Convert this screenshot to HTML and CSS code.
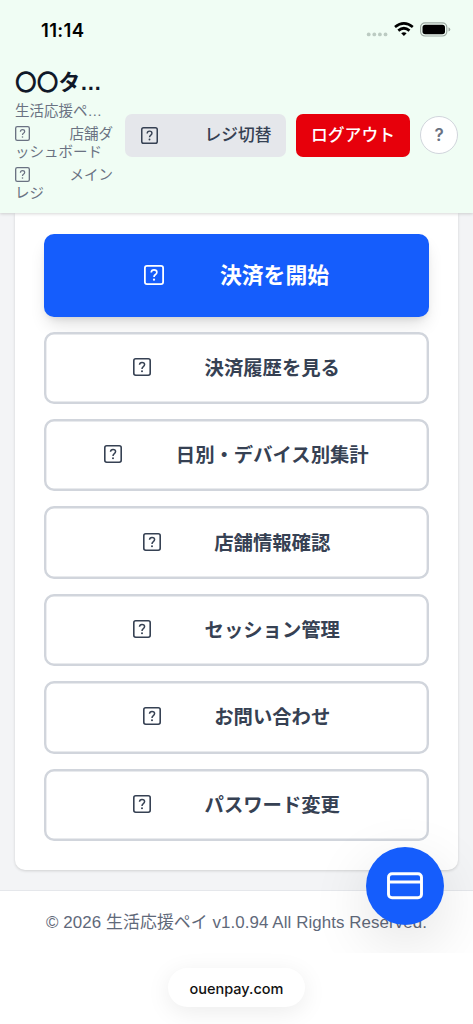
FILE: index.html
```
<!DOCTYPE html>
<html lang="ja">
<head>
<meta charset="utf-8">
<meta name="viewport" content="width=device-width, initial-scale=1">
<title>生活応援ペイ</title>
<link rel="stylesheet" href="styles.css">
</head>
<body>
<svg class="defs" width="0" height="0">
  <symbol id="unknown" viewBox="0 0 18 18">
    <rect x=".8" y=".8" width="16.4" height="16.4" rx="1.9" fill="none" stroke="currentColor" stroke-width="1.6"/>
    <path d="M6.5 6.8C6.6 5.2 7.6 4.4 9 4.4C10.5 4.4 11.6 5.3 11.6 6.6C11.6 7.7 11 8.2 10.1 8.8C9.3 9.4 9 9.8 9 10.9" fill="none" stroke="currentColor" stroke-width="1.5"/>
    <circle cx="9" cy="13.2" r="1" fill="currentColor"/>
  </symbol>
</svg>
<header class="header">
  <div class="status">
    <span class="time">11:14</span>
    <svg class="indicators" width="86" height="18" viewBox="0 0 86 18">
      <g fill="#bccbc2"><circle cx="3.7" cy="13.4" r="1.9"/><circle cx="9.3" cy="13.4" r="1.9"/><circle cx="14.9" cy="13.4" r="1.9"/><circle cx="20.5" cy="13.4" r="1.9"/></g>
      <g fill="none" stroke="#000" stroke-width="2.7"><path d="M30 6Q38.9 -1.2 47.8 6"/><path d="M33.3 9.6Q38.9 4.9 44.5 9.6"/></g>
      <path d="M36.2 12.3Q38.9 10 41.6 12.3L38.9 15Z"/>
      <rect x="55.6" y="1.8" width="26.2" height="13.2" rx="4.4" fill="none" stroke="#9ca9a1" stroke-width="1.2"/>
      <rect x="57.5" y="3.7" width="22.5" height="9.5" rx="2.7"/>
      <path d="M83.5 6.3Q85.3 7 85.3 8.4Q85.3 9.9 83.5 10.6Z" fill="#9ca9a1"/>
    </svg>
  </div>
  <div class="bar">
    <div class="store">
      <h1>〇〇タ…</h1>
      <p class="service">生活応援ペ…</p>
      <p><svg class="mini"><use href="#unknown"/></svg>店舗ダ<br>ッシュボード</p>
      <p class="register"><svg class="mini"><use href="#unknown"/></svg>メイン<br>レジ</p>
    </div>
    <button class="switch"><svg class="small"><use href="#unknown"/></svg>レジ切替</button>
    <button class="logout">ログアウト</button>
    <button class="help">?</button>
  </div>
</header>
<main class="main">
  <nav class="card">
    <button class="action primary"><svg class="icon"><use href="#unknown"/></svg>決済を開始</button>
    <button class="action"><svg class="icon"><use href="#unknown"/></svg>決済履歴を見る</button>
    <button class="action"><svg class="icon"><use href="#unknown"/></svg>日別・デバイス別集計</button>
    <button class="action"><svg class="icon"><use href="#unknown"/></svg>店舗情報確認</button>
    <button class="action"><svg class="icon"><use href="#unknown"/></svg>セッション管理</button>
    <button class="action"><svg class="icon"><use href="#unknown"/></svg>お問い合わせ</button>
    <button class="action"><svg class="icon"><use href="#unknown"/></svg>パスワード変更</button>
  </nav>
</main>
<footer class="footer">© 2026 生活応援ペイ v1.0.94 All Rights Reserved.</footer>
<div class="browser"><span class="address">ouenpay.com</span></div>
<div class="fab-layer">
  <button class="fab">
    <svg width="38" height="30" viewBox="0 0 38 30" fill="none" stroke="#fff" stroke-width="2.9"><rect x="2.5" y="2.7" width="33" height="24" rx="3.5"/><path d="M2.5 11H35.5"/></svg>
  </button>
</div>
</body>
</html>
```
FILE: styles.css
```
* { box-sizing: border-box; }
body {
  margin: 0;
  width: 473px;
  height: 1024px;
  overflow: hidden;
  position: relative;
  display: flex;
  flex-direction: column;
  background: #fff;
  color: #364153;
  font-family: "Liberation Sans", "Noto Sans CJK JP", sans-serif;
}
h1, p { margin: 0; }
button { border: 0; margin: 0; padding: 0; font: inherit; color: inherit; white-space: nowrap; }
svg { flex: none; }
.defs { position: absolute; }
.header {
  height: 213px;
  flex: none;
  background: #f0fdf4;
  box-shadow: 0 1px 3px rgba(0, 0, 0, .16);
  z-index: 1;
}
.status {
  height: 60px;
  padding: 0 22px 1px 41px;
  display: flex;
  align-items: center;
  justify-content: space-between;
}
.time { font: 600 18.5px/24px Inter, sans-serif; letter-spacing: .35px; color: #000; }
.bar { display: flex; align-items: center; height: 150px; padding: 0 15px; }
.store {
  width: 110px;
  flex: none;
  font-size: 14.5px;
  line-height: 18px;
  color: #6a7282;
  white-space: nowrap;
}
.store h1 { font-size: 21.7px; line-height: 30px; margin-bottom: 3px; color: #101828; }
.store .service { line-height: 20px; margin-bottom: 4px; }
.register { margin-top: 5px; }
.mini { width: 15px; height: 15px; margin-right: 39.5px; vertical-align: -2px; }
.switch, .logout {
  height: 43px;
  display: flex;
  align-items: center;
  padding-top: 1px;
  border-radius: 7px;
  font-size: 16.8px;
  font-weight: 500;
  line-height: 24px;
}
.switch { width: 161px; padding-left: 15.5px; background: #e5e7eb; }
.small { width: 17px; height: 17px; margin: 0 47px 1px 0; }
.logout { width: 114px; margin: 0 10px; justify-content: center; background: #e7000b; color: #fff; }
.help {
  width: 38px;
  height: 38px;
  border: 1px solid #d1d5dc;
  border-radius: 50%;
  background: #fff;
  color: #6a7282;
  font: 600 17px/24px Inter, sans-serif;
}
.main { height: 677px; flex: none; padding: 0 15px 20px; background: #f3f4f6; }
.card {
  height: 657px;
  padding: 21px 29px 0;
  display: flex;
  flex-direction: column;
  gap: 15px;
  background: #fff;
  border-radius: 0 0 10px 10px;
  box-shadow: 0 1px 3px rgba(0, 0, 0, .15);
}
.action {
  height: 72.4px;
  flex: none;
  display: flex;
  align-items: center;
  justify-content: center;
  box-shadow: inset 0 0 0 2.4px #d1d5dc;
  border-radius: 10px;
  background: #fff;
  font-size: 19.35px;
  font-weight: 600;
  line-height: 28px;
}
.icon { width: 18px; height: 18px; margin: 0 53.5px 2px 0; }
.primary {
  height: 82.6px;
  padding-top: 1px;
  background: #155dfc;
  color: #fff;
  font-size: 21.8px;
  font-weight: 700;
  box-shadow: 0 10px 18px -4px rgba(0, 0, 0, .14), 0 4px 7px -3px rgba(0, 0, 0, .1);
}
.primary .icon { width: 20px; height: 20px; margin-right: 56px; }
.footer {
  height: 63px;
  flex: none;
  border-top: 1px solid #e5e7eb;
  padding-top: 20px;
  font-size: 16.9px;
  letter-spacing: .08px;
  line-height: 24px;
  text-align: center;
  white-space: nowrap;
  color: #5f697a;
}
.browser { flex: 1; padding-top: 15px; display: flex; justify-content: center; align-items: flex-start; background: #fff; }
.address {
  width: 137px;
  height: 39px;
  padding-top: 1px;
  border-radius: 20px;
  background: #fff;
  color: #111;
  text-align: center;
  font: 500 14.5px/39px Inter, sans-serif;
  box-shadow: 0 5px 25px rgba(0, 0, 0, .08);
}
/* Clips the floating button's shadow at the edge of the web content. */
.fab-layer {
  position: absolute;
  inset: 213px 0 71px 0;
  overflow: hidden;
  pointer-events: none;
  z-index: 2;
}
.fab {
  position: absolute;
  right: 29px;
  bottom: 28.5px;
  width: 78px;
  height: 78px;
  display: grid;
  place-items: center;
  border-radius: 50%;
  background: #155dfc;
  box-shadow: 0 18px 60px rgba(0, 0, 0, .12);
}
```
